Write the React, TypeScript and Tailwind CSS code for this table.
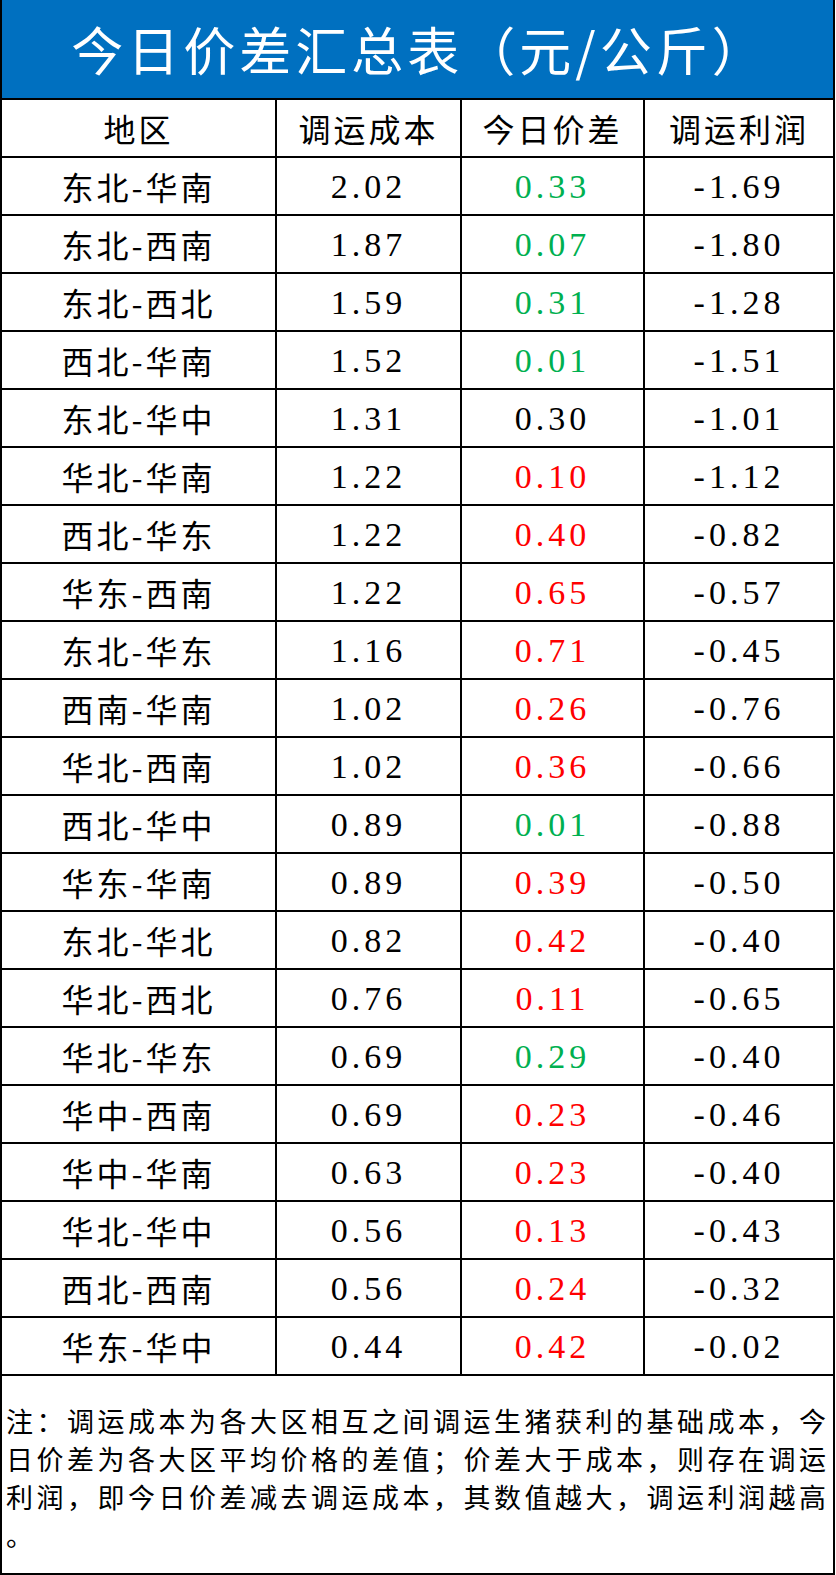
type Tone = 'g' | 'r' | 'k';

const rows: [string, string, string, Tone, string][] = [
  ['东北-华南', '2.02', '0.33', 'g', '-1.69'],
  ['东北-西南', '1.87', '0.07', 'g', '-1.80'],
  ['东北-西北', '1.59', '0.31', 'g', '-1.28'],
  ['西北-华南', '1.52', '0.01', 'g', '-1.51'],
  ['东北-华中', '1.31', '0.30', 'k', '-1.01'],
  ['华北-华南', '1.22', '0.10', 'r', '-1.12'],
  ['西北-华东', '1.22', '0.40', 'r', '-0.82'],
  ['华东-西南', '1.22', '0.65', 'r', '-0.57'],
  ['东北-华东', '1.16', '0.71', 'r', '-0.45'],
  ['西南-华南', '1.02', '0.26', 'r', '-0.76'],
  ['华北-西南', '1.02', '0.36', 'r', '-0.66'],
  ['西北-华中', '0.89', '0.01', 'g', '-0.88'],
  ['华东-华南', '0.89', '0.39', 'r', '-0.50'],
  ['东北-华北', '0.82', '0.42', 'r', '-0.40'],
  ['华北-西北', '0.76', '0.11', 'r', '-0.65'],
  ['华北-华东', '0.69', '0.29', 'g', '-0.40'],
  ['华中-西南', '0.69', '0.23', 'r', '-0.46'],
  ['华中-华南', '0.63', '0.23', 'r', '-0.40'],
  ['华北-华中', '0.56', '0.13', 'r', '-0.43'],
  ['西北-西南', '0.56', '0.24', 'r', '-0.32'],
  ['华东-华中', '0.44', '0.42', 'r', '-0.02'],
];

const toneClass: Record<Tone, string> = {
  g: 'text-[#00b050]',
  r: 'text-[#ff0000]',
  k: 'text-black',
};

const cjk = "font-['Noto_Sans_CJK_SC',sans-serif]";
const num = "font-['Liberation_Serif','Noto_Sans_CJK_SC',serif]";
// row is 58px tall including its 2px bottom line
const rowBase = 'grid grid-cols-[275px_185px_183px_1fr] h-[58px] shrink-0 border-b-2 border-black';

function Cell({ children, className = '', last = false }: { children: React.ReactNode; className?: string; last?: boolean }) {
  return (
    <div className={`flex items-center justify-center ${last ? '' : 'border-r-2 border-black'} ${className}`}>
      {children}
    </div>
  );
}

export default function App() {
  return (
    <div className="w-[836px] h-[1575px] bg-white">
      <div className="w-[835px] h-[1575px] border-l-2 border-r-2 border-b-2 border-black flex flex-col">
        <div className="h-[100px] shrink-0 bg-[#0070c0] border-b-2 border-black flex items-center justify-center">
          <h1 className={`${cjk} text-white text-[52px] font-normal tracking-[4px] leading-none pl-[4px]`}>
            今日价差汇总表（元/公斤）
          </h1>
        </div>

        <div className={`${rowBase} text-black text-[32px] tracking-[3px] ${cjk}`}>
          <Cell>地区</Cell>
          <Cell>调运成本</Cell>
          <Cell>今日价差</Cell>
          <Cell last>调运利润</Cell>
        </div>

        {rows.map(([region, cost, diff, tone, profit]) => (
          <div key={region} className={`${rowBase} text-black`}>
            <Cell className={`${cjk} text-[32px] tracking-[3px]`}>{region}</Cell>
            <Cell className={`${num} text-[34px] tracking-[4px]`}>{cost}</Cell>
            <Cell className={`${num} text-[34px] tracking-[4px] ${toneClass[tone]}`}>{diff}</Cell>
            <Cell last className={`${num} text-[34px] tracking-[4px]`}>{profit}</Cell>
          </div>
        ))}

        <div className={`flex-1 pl-[4px] pt-[26px] ${cjk} text-black text-[27px] tracking-[3.5px] leading-[38px] whitespace-nowrap`}>
          <p>注：调运成本为各大区相互之间调运生猪获利的基础成本，今</p>
          <p>日价差为各大区平均价格的差值；价差大于成本，则存在调运</p>
          <p>利润，即今日价差减去调运成本，其数值越大，调运利润越高</p>
          <p>。</p>
        </div>
      </div>
    </div>
  );
}
